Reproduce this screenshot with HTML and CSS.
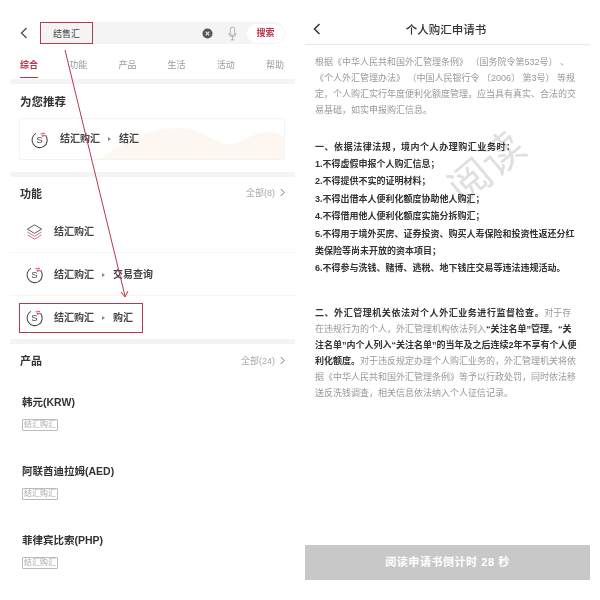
FILE: index.html
```html
<!DOCTYPE html>
<html lang="zh">
<head>
<meta charset="utf-8">
<title>个人购汇申请书</title>
<link rel="stylesheet" href="styles.css">
</head>
<body>
<main class="page">
  <section class="search-panel">
    <div class="search-row">
      <svg class="back" viewBox="0 0 10 14"><path d="M7.5 2 2.5 7l5 5" fill="none" stroke="#444" stroke-width="1.2"/></svg>
      <div class="search-bar">
        <span class="query">结售汇</span>
        <svg class="clear" viewBox="0 0 12 12"><circle cx="6" cy="6" r="5.5" fill="#555"/><path d="M4 4l4 4M8 4l-4 4" stroke="#eee" stroke-width="1.2"/></svg>
        <svg class="mic" viewBox="0 0 12 16"><rect x="3.6" y="1" width="4.8" height="9" rx="2.4" fill="none" stroke="#999" stroke-width=".8"/><path d="M2 7.5a4 4 0 0 0 8 0M6 11.5V15M4 15h4" fill="none" stroke="#999" stroke-width=".8"/></svg>
        <span class="search-btn">搜索</span>
      </div>
    </div>
    <nav class="tabs">
      <span class="tab active">综合</span><span class="tab">功能</span><span class="tab">产品</span><span class="tab">生活</span><span class="tab">活动</span><span class="tab">帮助</span>
    </nav>
    <div class="band"></div>
    <h2 class="rec-title">为您推荐</h2>
    <div class="rec-card">
      <svg class="waves" viewBox="0 0 266 42" preserveAspectRatio="none"><path d="M80 42C110 22 130 8 165 10c25 2 32 20 50 16 18-6 30-20 51-8v24z" fill="#fdf7f1"/></svg>
      <svg class="fx-icon" viewBox="0 0 20 20"><path d="M6.2 3.6A8 8 0 1 0 16.6 5.8" fill="none" stroke="#444" stroke-width="1.1"/><text x="10" y="14" text-anchor="middle" class="fx-s">S</text><path d="M11 4h4.5l-1.3-1.3M17 6h-4.5l1.3 1.3" fill="none" stroke="#c9485c" stroke-width="1"/></svg>
      <span class="crumb">结汇购汇</span><i class="tri"></i><span class="crumb">结汇</span>
    </div>
    <div class="band band-rec"></div>
    <div class="sec-head"><h2>功能</h2><span class="all">全部(8)<svg class="more" viewBox="0 0 6 10"><path d="M1 1l4 4-4 4" fill="none" stroke="#555" stroke-width="1"/></svg></span></div>
    <div class="func-row">
      <svg class="fx-icon" viewBox="0 0 20 20"><path d="M10 3 2.5 7.5 10 12l7.5-4.5z" fill="none" stroke="#555" stroke-width="1"/><path d="M2.5 10.5 10 15l7.5-4.5M2.5 13.5 10 18l7.5-4.5" fill="none" stroke="#c9707f" stroke-width="1"/></svg>
      <span class="crumb">结汇购汇</span>
    </div>
    <div class="func-row">
      <svg class="fx-icon" viewBox="0 0 20 20"><path d="M6.2 3.6A8 8 0 1 0 16.6 5.8" fill="none" stroke="#444" stroke-width="1.1"/><text x="10" y="14" text-anchor="middle" class="fx-s">S</text><path d="M11 4h4.5l-1.3-1.3M17 6h-4.5l1.3 1.3" fill="none" stroke="#c9485c" stroke-width="1"/></svg>
      <span class="crumb">结汇购汇</span><i class="tri"></i><span class="crumb">交易查询</span>
    </div>
    <div class="func-row last">
      <svg class="fx-icon" viewBox="0 0 20 20"><path d="M6.2 3.6A8 8 0 1 0 16.6 5.8" fill="none" stroke="#444" stroke-width="1.1"/><text x="10" y="14" text-anchor="middle" class="fx-s">S</text><path d="M11 4h4.5l-1.3-1.3M17 6h-4.5l1.3 1.3" fill="none" stroke="#c9485c" stroke-width="1"/></svg>
      <span class="crumb">结汇购汇</span><i class="tri"></i><span class="crumb">购汇</span>
    </div>
    <div class="band"></div>
    <div class="sec-head prod"><h2>产品</h2><span class="all">全部(24)<svg class="more" viewBox="0 0 6 10"><path d="M1 1l4 4-4 4" fill="none" stroke="#555" stroke-width="1"/></svg></span></div>
    <div class="product"><div class="p-name">韩元(KRW)</div><span class="tag">结汇购汇</span></div>
    <div class="product"><div class="p-name">阿联酋迪拉姆(AED)</div><span class="tag">结汇购汇</span></div>
    <div class="product"><div class="p-name">菲律宾比索(PHP)</div><span class="tag">结汇购汇</span></div>

    <div class="mark mark-query"></div>
    <div class="mark mark-row"></div>
    <svg class="arrow" viewBox="0 0 300 340"><path d="M65 50 125 296M121 292l4 5 3-6" fill="none" stroke="#b5384d" stroke-width="1"/></svg>
  </section>

  <section class="doc-panel">
    <header class="doc-head">
      <svg class="doc-back" viewBox="0 0 10 14"><path d="M7.5 2 2.5 7l5 5" fill="none" stroke="#333" stroke-width="1.5"/></svg>
      <h1>个人购汇申请书</h1>
    </header>
    <div class="doc-body">
      <div class="watermark">阅读</div>
      <p class="para">根据《中华人民共和国外汇管理条例》 （国务院令第532号） 、<br>《个人外汇管理办法》 （中国人民银行令 〔2006〕 第3号） 等规<br>定，个人购汇实行年度便利化额度管理，应当具有真实、合法的交<br>易基础，如实申报购汇信息。</p>
      <p class="rules"><span class="lead">一、依据法律法规，境内个人办理购汇业务时：</span><br>1.不得虚假申报个人购汇信息；<br>2.不得提供不实的证明材料；<br>3.不得出借本人便利化额度协助他人购汇；<br>4.不得借用他人便利化额度实施分拆购汇；<br>5.不得用于境外买房、证券投资、购买人寿保险和投资性返还分红<br>类保险等尚未开放的资本项目；<br>6.不得参与洗钱、赌博、逃税、地下钱庄交易等违法违规活动。</p>
      <p class="para second"><b class="lead">二、外汇管理机关依法对个人外汇业务进行监督检查。</b>对于存<br>在违规行为的个人，外汇管理机构依法列入<b>“关注名单”管理。“关<br>注名单”内个人列入“关注名单”的当年及之后连续2年不享有个人便<br>利化额度。</b>对于违反规定办理个人购汇业务的，外汇管理机关将依<br>据《中华人民共和国外汇管理条例》等予以行政处罚，同时依法移<br>送反洗钱调查，相关信息依法纳入个人征信记录。</p>
    </div>
    <div class="countdown">阅读申请书倒计时 28 秒</div>
  </section>
</main>
</body>
</html>
```
FILE: styles.css
```css
* { box-sizing: border-box; }
html, body { margin: 0; padding: 0; background: #fff; }
body {
  width: 600px;
  height: 600px;
  overflow: hidden;
  font-family: "Liberation Sans", "Noto Sans CJK SC", sans-serif;
  color: #333;
}
.fx-s { font: 10px "Liberation Sans", sans-serif; fill: #444; }
.page {
  display: grid;
  grid-template-columns: 285px 285px;
  gap: 10px;
  padding-left: 10px;
  height: 600px;
  filter: blur(.35px);
}
h1, h2, p { margin: 0; }

/* left panel */
.search-panel { position: relative; padding-top: 22px; }
.search-row { display: flex; align-items: center; height: 22px; margin-right: 10px; }
.back { width: 10px; height: 14px; margin-left: 9px; margin-right: 11px; flex: none; }
.search-bar {
  flex: 1;
  height: 22px;
  display: flex;
  align-items: center;
  background: #f4f4f4;
  border-radius: 11px;
  padding-left: 13px;
  padding-right: 1px;
}
.query { font-size: 9px; color: #444; flex: 1; }
.clear { width: 11px; height: 11px; margin-right: 14px; }
.mic { width: 11px; height: 15px; margin-right: 9px; }
.search-btn {
  width: 37px;
  height: 19px;
  border-radius: 10px;
  background: #fff;
  color: #b5344a;
  font-size: 9px;
  font-weight: 700;
  line-height: 19px;
  text-align: center;
}
.tabs {
  display: flex;
  justify-content: space-between;
  height: 35px;
  padding: 15px 11px 0 10px;
  font-size: 9px;
  color: #999;
}
.tab { position: relative; width: 18px; white-space: nowrap; line-height: 13px; }
.tab.active { color: #b5344a; font-weight: 700; }
.tab.active::after {
  content: "";
  position: absolute;
  left: 0;
  right: 0;
  top: 18px;
  height: 1px;
  background: #b5344a;
}
.band { height: 5px; background: #f4f4f4; }
.rec-title {
  font-size: 11.5px;
  line-height: 16px;
  padding: 10px 0 8px 10px;
  height: 34px;
  color: #333;
}
.rec-card {
  position: relative;
  display: flex;
  align-items: center;
  margin: 0 10px 0 9px;
  height: 42px;
  border: 1px solid #f3f3f3;
  border-radius: 2px;
  padding-left: 10px;
  overflow: hidden;
}
.rec-card > .fx-icon { margin-right: 11px; position: relative; }
.rec-card .crumb { position: relative; }
.waves { position: absolute; inset: 0; width: 100%; height: 100%; }
.band-rec { margin-top: 12px; }
.fx-icon { width: 19px; height: 19px; flex: none; }
.crumb { font-size: 10px; font-weight: 700; color: #444; line-height: 14px; white-space: nowrap; }
.tri {
  width: 0;
  height: 0;
  margin: 0 8px 0 8px;
  border-left: 3px solid #888;
  border-top: 2px solid transparent;
  border-bottom: 2px solid transparent;
  position: relative;
}
.sec-head {
  display: flex;
  justify-content: space-between;
  align-items: center;
  height: 33px;
  padding: 0 10px 2px 10px;
}
.sec-head h2 { font-size: 11px; color: #333; }
.all { display: flex; align-items: center; font-size: 9px; color: #aaa; }
.more { width: 5px; height: 9px; margin-left: 5px; }
.func-row {
  display: flex;
  align-items: center;
  height: 43px;
  padding: 1px 0 0 15px;
  border-bottom: 1px solid #f5f5f5;
}
.func-row > .fx-icon { margin-right: 10px; }
.func-row.last { border-bottom: 0; padding-top: 0; }
.prod { height: 34px; }
.product { height: 69px; padding: 17px 0 0 12px; }
.p-name { font-size: 10.5px; font-weight: 700; line-height: 14px; color: #333; }
.tag {
  display: block;
  width: 36px;
  height: 12px;
  margin-top: 10px;
  border: 1px solid #bbb;
  border-radius: 1px;
  font-size: 8px;
  line-height: 10px;
  text-align: center;
  color: #aaa;
  white-space: nowrap;
}
.mark { position: absolute; border: 1.5px solid #b5384d; }
.mark-query { left: 30px; top: 22px; width: 53px; height: 22px; }
.mark-row { left: 9px; top: 303px; width: 124px; height: 30px; }
.arrow { position: absolute; left: -10px; top: 0; width: 300px; height: 340px; pointer-events: none; }

/* right panel */
.doc-panel { display: flex; flex-direction: column; height: 580px; }
.doc-head {
  position: relative;
  flex: none;
  height: 45px;
  border-bottom: 1px solid #e8e8e8;
  padding: 23px 3px 0 0;
  text-align: center;
}
.doc-head h1 { font-size: 11.5px; font-weight: 500; line-height: 15px; color: #333; }
.doc-back { position: absolute; left: 7px; top: 22px; width: 10px; height: 14px; }
.doc-body { position: relative; flex: 1; padding: 9px 0 0 10px; font-size: 9px; white-space: nowrap; }
.para { line-height: 16px; color: #999; }
.para b { color: #333; }
.rules { margin-top: 20.5px; line-height: 17.4px; font-weight: 700; color: #333; }
.lead { letter-spacing: .55px; }
.second { margin-top: 27px; }
.watermark {
  position: absolute;
  left: 140px;
  top: 102px;
  font-size: 42px;
  font-weight: 400;
  line-height: 1;
  color: #e0e0e0;
  transform: rotate(-40deg);
}
.para, .rules { position: relative; }
.countdown {
  flex: none;
  height: 35px;
  background: #c8c8c8;
  color: #fff;
  font-size: 11px;
  font-weight: 700;
  line-height: 35px;
  text-align: center;
  letter-spacing: .05em;
}
```
